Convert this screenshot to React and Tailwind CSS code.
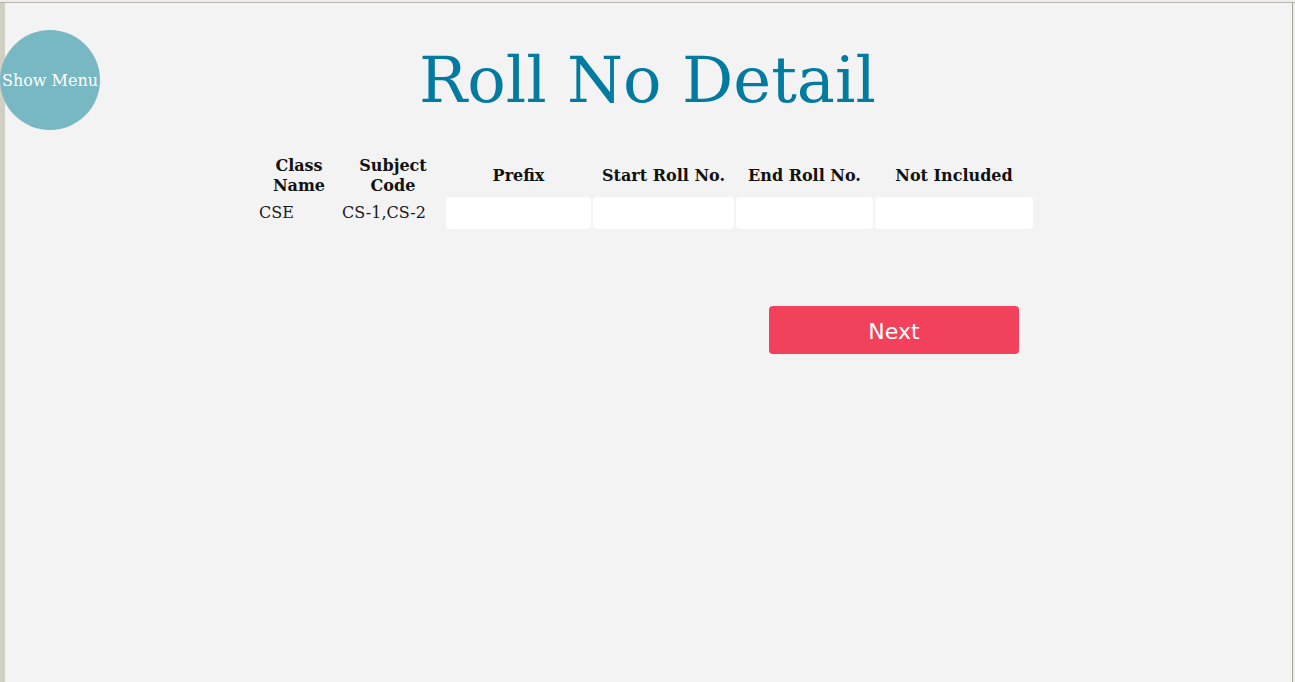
export default function App() {
  const serif = { fontFamily: '"DejaVu Serif", serif' };
  const headers = [
    ["Class", "Name"],
    ["Subject", "Code"],
    ["Prefix"],
    ["Start Roll No."],
    ["End Roll No."],
    ["Not Included"],
  ];
  return (
    <div className="relative w-[1295px] h-[682px] overflow-hidden bg-[#f3f3f3] flex flex-col" style={serif}>
      <div className="h-[3px] bg-[#ececec] border-b border-[#b9b5ad] shrink-0" />
      <div className="flex flex-1">
        <div className="w-[5px] bg-[#d0d0c4] shrink-0" />
        <main className="flex-1 flex flex-col items-center pr-[2px]">
          <h1 className="mt-[45px] text-[64px] leading-[64px] text-[#037ba1] whitespace-nowrap">
            Roll No Detail
          </h1>
          <div className="mt-[43px] w-[775px] -ml-[4px]">
            <div className="grid grid-cols-[82px_102px_145px_141px_137px_158px] gap-[2px] text-[16px] text-[#111]">
              {headers.map((h, i) => (
                <div key={i} className="h-[40px] pt-[2px] flex flex-col items-center justify-center font-bold leading-[20px] text-center">
                  {h.map((l, j) => (
                    <span key={j} className="whitespace-nowrap">{l}</span>
                  ))}
                </div>
              ))}
              <div className="h-[32px] flex items-center pl-[1px] text-[#1a1a1a]">CSE</div>
              <div className="h-[32px] flex items-center text-[#1a1a1a] whitespace-nowrap">CS-1,CS-2</div>
              <input className="h-[32px] w-full rounded-[4px] bg-white outline-none" />
              <input className="h-[32px] w-full rounded-[4px] bg-white outline-none" />
              <input className="h-[32px] w-full rounded-[4px] bg-white outline-none" />
              <input className="h-[32px] w-full rounded-[4px] bg-white outline-none" />
            </div>
            <button
              className="mt-[77px] ml-[511px] w-[250px] h-[48px] pt-[2px] rounded-[4px] bg-[#f2415a] text-white text-[22px] flex items-center justify-center"
              style={{ fontFamily: '"DejaVu Sans", sans-serif' }}
            >
              Next
            </button>
          </div>
        </main>
        <div className="w-[3px] border-l border-[#a9a59d] bg-[#efeee9] shrink-0" />
      </div>
      <button className="absolute left-0 top-[30px] w-[100px] h-[100px] pt-[2px] rounded-full bg-[#78b8c2] text-white text-[16px] flex items-center justify-center whitespace-nowrap" style={serif}>
        Show Menu
      </button>
    </div>
  );
}
